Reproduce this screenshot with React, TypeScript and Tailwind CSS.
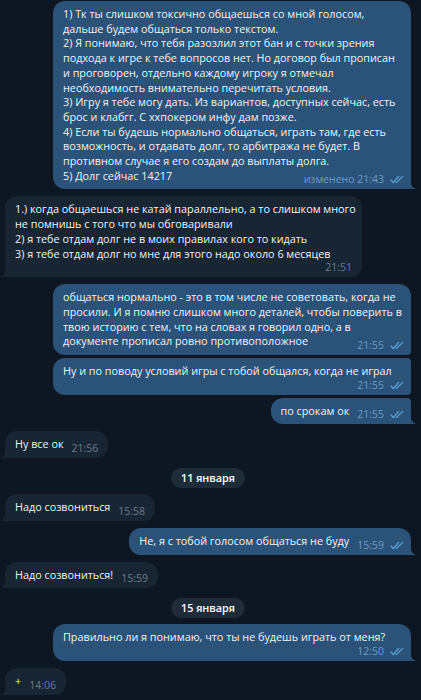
import React from 'react';

type Pos = 'single' | 'first' | 'mid' | 'last';

type Msg = {
    kind: 'msg';
    out: boolean;
    lines: string[];
    time: string;
    edited?: boolean;
    timeBelow?: boolean;
    wide?: boolean;
    pos: Pos;
    mt: string;
};

type DateSep = { kind: 'date'; label: string; mt: string };

const items: (Msg | DateSep)[] = [
    {
        kind: 'msg', out: true, pos: 'single', wide: true, edited: true, time: '21:43', mt: 'mt-[1px]',
        lines: [
            '1) Тк ты слишком токсично общаешься со мной голосом,',
            'дальше будем общаться только текстом.',
            '2) Я понимаю, что тебя разозлил этот бан и с точки зрения',
            'подхода к игре к тебе вопросов нет. Но договор был прописан',
            'и проговорен, отдельно каждому игроку я отмечал',
            'необходимость внимательно перечитать условия.',
            '3) Игру я тебе могу дать. Из вариантов, доступных сейчас, есть',
            'брос и клабгг. С ххпокером инфу дам позже.',
            '4) Если ты будешь нормально общаться, играть там, где есть',
            'возможность, и отдавать долг, то арбитража не будет. В',
            'противном случае я его создам до выплаты долга.',
            '5) Долг сейчас 14217',
        ],
    },
    {
        kind: 'msg', out: false, pos: 'single', wide: true, timeBelow: true, time: '21:51', mt: 'mt-[7px]',
        lines: [
            '1.) когда общаешься не катай параллельно, а то слишком много',
            'не помнишь с того что мы обговаривали',
            '2) я тебе отдам долг не в моих правилах кого то кидать',
            '3) я тебе отдам долг но мне для этого надо около 6 месяцев',
        ],
    },
    {
        kind: 'msg', out: true, pos: 'first', wide: true, time: '21:55', mt: 'mt-[7px]',
        lines: [
            'общаться нормально - это в том числе не советовать, когда не',
            'просили. И я помню слишком много деталей, чтобы поверить в',
            'твою историю с тем, что на словах я говорил одно, а в',
            'документе прописал ровно противоположное',
        ],
    },
    {
        kind: 'msg', out: true, pos: 'mid', wide: true, timeBelow: true, time: '21:55', mt: 'mt-[3px]',
        lines: ['Ну и по поводу условий игры с тобой общался, когда не играл'],
    },
    { kind: 'msg', out: true, pos: 'last', time: '21:55', mt: 'mt-[3px]', lines: ['по срокам ок'] },
    { kind: 'msg', out: false, pos: 'single', time: '21:56', mt: 'mt-[7px]', lines: ['Ну все ок'] },
    { kind: 'date', label: '11 января', mt: 'mt-[10px]' },
    { kind: 'msg', out: false, pos: 'single', time: '15:58', mt: 'mt-[6px]', lines: ['Надо созвониться'] },
    { kind: 'msg', out: true, pos: 'single', time: '15:59', mt: 'mt-[7px]', lines: ['Не, я с тобой голосом общаться не буду'] },
    { kind: 'msg', out: false, pos: 'single', time: '15:59', mt: 'mt-[7px]', lines: ['Надо созвониться!'] },
    { kind: 'date', label: '15 января', mt: 'mt-[10px]' },
    {
        kind: 'msg', out: true, pos: 'single', wide: true, timeBelow: true, time: '12:50', mt: 'mt-[6px]',
        lines: ['Правильно ли я понимаю, что ты не будешь играть от меня?'],
    },
    { kind: 'msg', out: false, pos: 'single', time: '14:06', mt: 'mt-[7px]', lines: ['+'] },
];

const Checks = () => (
    <svg width="14" height="9" viewBox="0 0 14 9" fill="none" className="shrink-0">
        <path d="M1 5 L3.4 7.6 L8.6 1.4" stroke="#62a8e2" strokeWidth="1.2" strokeLinecap="round" strokeLinejoin="round" />
        <path d="M6.2 7.6 L12.8 1.4" stroke="#62a8e2" strokeWidth="1.2" strokeLinecap="round" />
    </svg>
);

const Tail = ({ out }: { out: boolean }) =>
    out ? (
        <svg width="6" height="10" viewBox="0 0 6 10" className="absolute bottom-0 right-[-5px]">
            <path d="M0 0 C0 5 2 8.6 6 10 L0 10 Z" fill="#2b5278" />
        </svg>
    ) : (
        <svg width="6" height="10" viewBox="0 0 6 10" className="absolute bottom-0 left-[-5px]">
            <path d="M6 0 C6 5 4 8.6 0 10 L6 10 Z" fill="#182533" />
        </svg>
    );

const radius = (out: boolean, pos: Pos) => {
    if (out) {
        if (pos === 'first') return 'rounded-[12px] rounded-br-[4px]';
        if (pos === 'mid') return 'rounded-[12px] rounded-tr-[4px] rounded-br-[4px]';
        if (pos === 'last') return 'rounded-[12px] rounded-tr-[4px] rounded-br-none';
        return 'rounded-[12px] rounded-br-none';
    }
    return 'rounded-[12px] rounded-bl-none';
};

const Time = ({ m }: { m: Msg }) => (
    <span
        className={`flex items-center gap-[6px] whitespace-nowrap text-[10.5px] leading-[13px] ${
            m.out ? 'text-[#6f9bc6] -mr-[3px]' : 'text-[#6c7c8c]'
        }`}
    >
        <span>
            {m.edited ? 'изменено ' : ''}
            {m.time}
        </span>
        {m.out && <Checks />}
    </span>
);

const Bubble = ({ m }: { m: Msg }) => {
    const head = m.lines.slice(0, -1);
    const last = m.lines[m.lines.length - 1];
    const hasTail = m.pos === 'single' || m.pos === 'last';
    return (
        <div className={`flex ${m.out ? 'justify-end' : 'justify-start'} ${m.mt}`}>
            <div
                className={`relative px-[10px] pt-[6px] ${m.timeBelow ? 'pb-[3px]' : 'pb-[6px]'} ${
                    m.out ? 'bg-[#2b5278]' : 'bg-[#182533]'
                } ${m.wide ? (m.out ? 'w-[358px]' : 'w-[357px]') : ''} ${radius(m.out, m.pos)}`}
            >
                <div className="text-[10.8px] leading-[14.7px] text-[#f1f3f5]">
                    {head.map((l, i) => (
                        <div key={i} className="whitespace-nowrap">{l}</div>
                    ))}
                    {m.timeBelow ? (
                        <>
                            <div className="whitespace-nowrap">{last}</div>
                            <div className="flex justify-end">
                                <Time m={m} />
                            </div>
                        </>
                    ) : (
                        <div className="flex items-end">
                            <span className="whitespace-nowrap">{last}</span>
                            <span className="ml-auto pl-[8px] -mb-[3px]">
                                <Time m={m} />
                            </span>
                        </div>
                    )}
                </div>
                {hasTail && <Tail out={m.out} />}
            </div>
        </div>
    );
};

export default function App() {
    return (
        <div
            className="h-[700px] w-[421px] overflow-hidden bg-[#0e1621] pl-[5px] pr-[10px]"
            style={{ fontFamily: '"Open Sans", "Noto Sans", sans-serif' }}
        >
            {items.map((it, i) =>
                it.kind === 'date' ? (
                    <div key={i} className={`flex justify-center ${it.mt}`}>
                        <span className="h-[20px] rounded-full bg-[#1e2c3a] px-[10px] text-[10.8px] font-semibold leading-[20px] text-white">
                            {it.label}
                        </span>
                    </div>
                ) : (
                    <Bubble key={i} m={it} />
                )
            )}
        </div>
    );
}
